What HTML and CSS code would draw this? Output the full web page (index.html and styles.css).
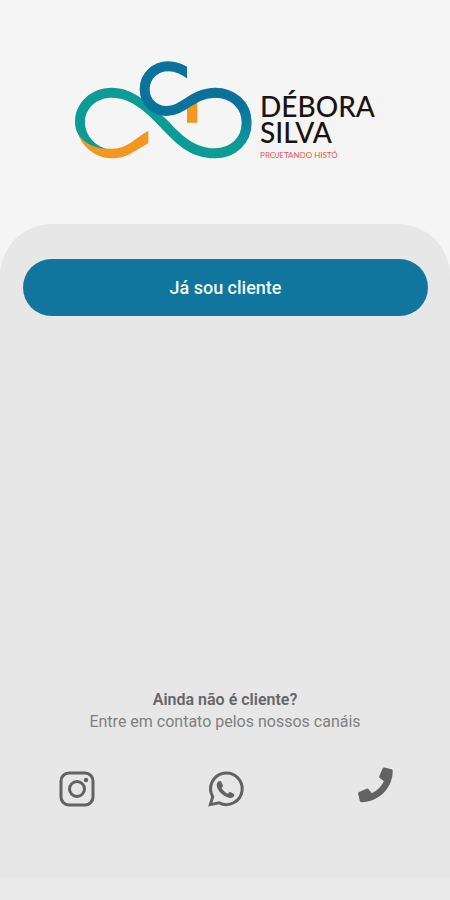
FILE: index.html
```html
<!DOCTYPE html>
<html lang="pt-BR">
<head>
    <meta charset="UTF-8">
    <meta name="viewport" content="width=device-width, initial-scale=1.0">
    <title>Débora Silva</title>
    <link rel="stylesheet" href="styles.css">
</head>
<body>
    <header class="header">
        <svg class="logo" viewBox="30 34 531 294" aria-hidden="true">
            <defs>
                <linearGradient id="loop" gradientUnits="userSpaceOnUse" x1="500" y1="150" x2="520" y2="290">
                    <stop offset="0.2" stop-color="#0b729b" />
                    <stop offset="1" stop-color="#0c9c95" />
                </linearGradient>
                <clipPath id="hook">
                    <path d="M200 20H366V105H470V240H200z" />
                </clipPath>
            </defs>
            <path fill="#f0981f" d="M366 170L397 150V219H366z" />
            <path fill="#f0981f" d="M35 240C50 298 98 326 145 326C188 326 214 300 250 281V243C208 267 188 296 142 297C98 298 62 280 35 240z" />
            <path fill="#0c9c95" d="M30 217C30 158 80 114 140 114C190 114 228 142 262 172L300 205C338 242 378 296 450 296L450 326C372 326 330 278 286 232C246 190 200 144 140 144C94 144 60 176 60 217C60 256 88 288 124 297C82 296 30 270 30 217z" />
            <path fill="none" stroke="url(#loop)" stroke-width="30" d="M449 311C505 311 545 272 545 219C545 166 503 129 450 129" />
            <path fill="none" stroke="#0b729b" stroke-width="30" clip-path="url(#hook)" d="M385 81C356 59 336 50 310 50C270 50 239 80 239 118C239 156 268 184 304 184C358 184 382 129 451 129" />
        </svg>
        <div class="brand">
            <h1 class="brand-name">DÉBORA<br>SILVA</h1>
            <p class="brand-tagline">PROJETANDO HISTÓ</p>
        </div>
    </header>

    <main class="panel">
        <button class="login-button" type="button">Já sou cliente</button>

        <section class="contact">
            <h2 class="contact-title">Ainda não é cliente?</h2>
            <p class="contact-text">Entre em contato pelos nossos canáis</p>
            <nav class="channels">
                <a href="#instagram" aria-label="Instagram">
                    <svg class="icon" viewBox="0 0 36 36">
                        <rect x="2" y="2" width="32" height="32" rx="8" fill="none" stroke="currentColor" stroke-width="3" />
                        <circle cx="18" cy="18" r="7.5" fill="none" stroke="currentColor" stroke-width="3" />
                        <circle cx="27" cy="9" r="2.2" fill="currentColor" />
                    </svg>
                </a>
                <a href="#whatsapp" aria-label="WhatsApp">
                    <svg class="icon" viewBox="0 0 36 36">
                        <path fill="none" stroke="currentColor" stroke-width="3" d="M2.3 33.6L4.7 25.6A15.8 15.8 0 1 1 11.2 31.8z" />
                        <path fill="currentColor" d="M10.2 10.6C11.2 9.8 12.5 9.6 13.1 10.5L15 14.4C15.3 15.3 14.2 16.2 13.6 17C15 19.6 17 21.4 19.8 22.7C20.6 21.8 21.5 20.6 22.3 21L26 22.9C26.8 23.4 26.2 25.1 25.3 25.9C23.2 27.6 20.2 26.9 17.6 25.6C14.3 23.9 11.4 21.2 9.7 17.8C8.4 15.1 8.3 12.4 10.2 10.6z" />
                    </svg>
                </a>
                <a href="#telefone" aria-label="Telefone">
                    <svg class="icon" viewBox="-16 52 532 532">
                        <path fill="currentColor" d="M493.4 24.6l-104-24c-11.3-2.6-22.9 3.3-27.5 13.9l-48 112c-4.2 9.8-1.4 21.3 6.9 28l60.6 49.6c-36 76.7-98.9 140.5-177.2 177.2l-49.6-60.6c-6.8-8.3-18.2-11.1-28-6.9l-112 48C3.9 366.5-2 378.1.6 389.4l24 104C27.1 504.2 36.7 512 48 512c256.1 0 464-207.5 464-464 0-11.2-7.7-20.9-18.6-23.4z" />
                    </svg>
                </a>
            </nav>
        </section>
    </main>

    <footer class="bottom-bar"></footer>
</body>
</html>
```

FILE: styles.css
```css
* {
    box-sizing: border-box;
}

body {
    font-family: Roboto, Arial, sans-serif;
    background-color: #f5f5f5;
    color: #666;
    display: flex;
    flex-direction: column;
    min-height: 100vh;
    margin: 0;
}

h1,
h2,
p {
    margin: 0;
}

.header {
    display: flex;
    justify-content: center;
    align-items: center;
    gap: 8px;
    padding: 60px 16px 64px;
}

.logo {
    width: 177px;
    height: 100px;
}

.brand {
    font-family: Lato, sans-serif;
    padding-top: 32px;
}

.brand-name {
    color: #1c1210;
    font-size: 28px;
    font-weight: 500;
    line-height: 26px;
}

.brand-tagline {
    color: #e8564f;
    font-size: 8px;
    line-height: 10px;
    padding-top: 5px;
}

.panel {
    flex: 1;
    display: flex;
    flex-direction: column;
    justify-content: space-between;
    background-color: #e7e7e7;
    border-radius: 52px 52px 0 0;
    padding: 35px 0 71px;
}

.login-button {
    margin: 0 22px 0 23px;
    padding: 17px 16px 16px;
    border: none;
    border-radius: 29px;
    background-color: #10769d;
    color: #f0f8fb;
    font-family: inherit;
    font-size: 18px;
    font-weight: 500;
    line-height: 24px;
    cursor: pointer;
}

    .login-button:hover {
        background-color: #0d6486;
    }

.contact {
    text-align: center;
}

.contact-title {
    font-size: 16px;
    font-weight: 600;
    line-height: 22px;
}

.contact-text {
    color: #808080;
    font-size: 16px;
    line-height: 22px;
}

.channels {
    display: grid;
    grid-template-columns: repeat(3, 1fr);
    margin-top: 38px;
    padding-left: 2px;
}

.channels a {
    color: #626262;
}

.icon {
    display: block;
    width: 36px;
    height: 36px;
    margin: 0 auto;
    overflow: visible;
}

.bottom-bar {
    height: 22px;
    background-color: #e9e9e9;
}
```
